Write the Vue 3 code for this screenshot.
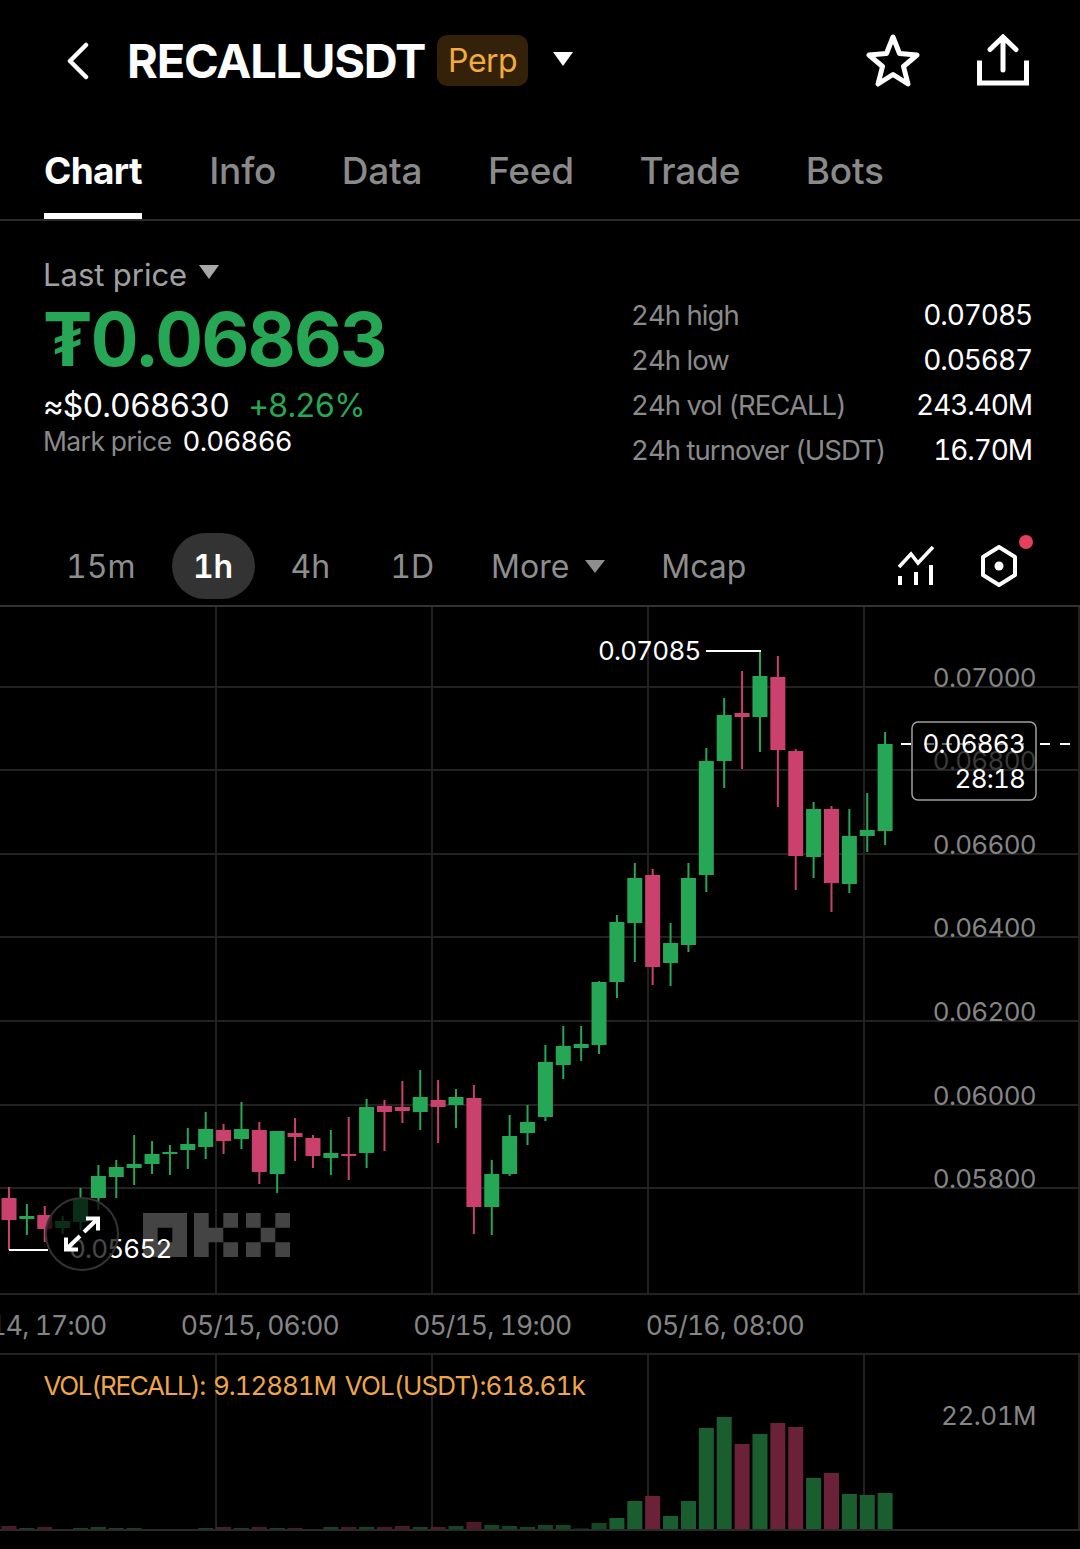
<template>
  <div class="page">
    <header class="top-bar">
      <div class="title-group">
        <svg class="back" width="24" height="38" viewBox="0 0 24 38" fill="none" stroke="#fff" stroke-width="4.5" stroke-linecap="round" stroke-linejoin="round">
          <path d="M20 3 4 19l16 16" />
        </svg>
        <h1 class="symbol">RECALLUSDT</h1>
        <span class="badge">Perp</span>
        <svg class="caret" width="22" height="16" viewBox="0 0 22 16"><path d="M1 1h20L11 15z" fill="#fff" /></svg>
      </div>
      <div class="top-actions">
        <svg width="54" height="54" viewBox="0 0 54 54" fill="none" stroke="#fff" stroke-width="5" stroke-linejoin="round">
          <path d="M27 3 33.500 19.500 51 21 37.500 32.500 42 50 27 40.500 12 50 16.500 32.500 3 21 20.500 19.500Z" />
        </svg>
        <svg width="52" height="54" viewBox="0 0 52 54" fill="none" stroke="#fff" stroke-width="5" stroke-linecap="round" stroke-linejoin="miter">
          <path d="M26 36V3M13 15.500 26 3l13 12.500" />
          <path d="M2.500 26.500V49h47V26.500" stroke-linecap="butt" />
        </svg>
      </div>
    </header>

    <nav class="tabs">
      <a v-for="tab in tabs" :key="tab" class="tab" :class="{ active: tab === 'Chart' }">{{ tab }}</a>
    </nav>

    <section class="summary">
      <div class="price-col">
        <div class="last-price">
          Last price
          <svg width="20" height="14" viewBox="0 0 20 14"><path d="M0 0h20L10 14z" fill="#a8a8a8" /></svg>
        </div>
        <div class="price">₮0.06863</div>
        <div class="usd-row">
          <span class="usd">≈$0.068630</span>
          <span class="change">+8.26%</span>
        </div>
        <div class="mark-row">
          <span class="mark-label">Mark price</span>
          <span class="mark-value">0.06866</span>
        </div>
      </div>
      <dl class="stats">
        <div v-for="s in stats" :key="s.label" class="stat">
          <dt>{{ s.label }}</dt>
          <dd>{{ s.value }}</dd>
        </div>
      </dl>
    </section>

    <div class="intervals">
      <span class="iv iv-15">15m</span>
      <span class="iv iv-1h">1h</span>
      <span class="iv iv-4h">4h</span>
      <span class="iv iv-1d">1D</span>
      <span class="iv iv-more">
        More
        <svg width="20" height="13" viewBox="0 0 20 13"><path d="M0 0h20L10 13z" fill="#8e8e8e" /></svg>
      </span>
      <span class="iv iv-mcap">Mcap</span>
      <div class="iv-tools">
        <svg width="38" height="40" viewBox="0 0 38 40" fill="none" stroke="#fff" stroke-width="4">
          <path d="M2 21 14 8l7 9L36 1" stroke-width="3.600" />
          <path d="M3 30v9M19 26v13M34 19v20" />
        </svg>
        <div class="hex-wrap">
          <svg width="38" height="42" viewBox="0 0 38 42" fill="none" stroke="#fff" stroke-width="4" stroke-linejoin="round">
            <path d="M19 2 35 12v18L19 40 3 30V12Z" />
            <circle cx="19" cy="21" r="4.500" fill="#fff" stroke="none" />
          </svg>
          <span class="dot"></span>
        </div>
      </div>
    </div>

    <div class="chart">
      <svg class="plot" width="1080" height="687" viewBox="0 607 1080 687">
        <line v-for="y in gridY" :key="y" x1="0" x2="1080" :y1="y" :y2="y" class="grid" />
        <line v-for="x in gridX" :key="x" :x1="x" :x2="x" y1="607" y2="1294" class="grid" />

        <text v-for="a in axis" :key="a.label" x="1036" :y="a.y" text-anchor="end" class="axis-label" :class="{ faded: a.faded }">{{ a.label }}</text>

        <g v-for="c in candleList" :key="c.x" :fill="c.color">
          <rect :x="c.x - 1" :y="c.wickTop" width="2" :height="c.wickBottom - c.wickTop" />
          <rect :x="c.x - 7.500" :y="c.top" width="15" :height="c.bottom - c.top" />
        </g>

        <g class="logo" fill="#444">
          <path fill-rule="evenodd" d="M143 1213h44v44h-44zM157.700 1227.700v14.600h14.600v-14.600z" />
          <path d="M194 1213h14.700v44H194zM208.700 1227.700h14.600v14.600h-14.600zM223.300 1213H238v14.700h-14.700zM223.300 1242.300H238V1257h-14.700z" />
          <path d="M246 1213h14.700v14.700H246zM275.300 1213H290v14.700h-14.700zM260.700 1227.700h14.600v14.600h-14.600zM246 1242.300h14.700V1257H246zM275.300 1242.300H290V1257h-14.700z" />
        </g>

        <!-- high / low markers -->
        <text x="598" y="660" class="marker">0.07085</text>
        <line x1="706" x2="761" y1="651" y2="651" class="marker-line" />
        <text x="69" y="1258" class="marker">0.05652</text>
        <line x1="9" x2="48" y1="1250" y2="1250" class="marker-line" />

        <!-- last price tag -->
        <line x1="901" x2="1071" y1="744" y2="744" class="last-line" />
        <line x1="924" x2="1030" y1="744" y2="744" class="last-line-in" />
        <rect x="912" y="722" width="124" height="78" rx="6" class="last-box" />
        <text x="1025" y="753" text-anchor="end" class="marker">0.06863</text>
        <text x="1025" y="788" text-anchor="end" class="marker">28:18</text>
      </svg>

      <button class="expand">
        <svg width="40" height="40" viewBox="0 0 40 40" fill="none" stroke="#fff" stroke-width="4">
          <path d="M24 4.500h12v12M36 4.500 22 18" />
          <path d="M16 35.500H4v-12M4 35.500 18 22" />
        </svg>
      </button>
    </div>

    <div class="time-axis">
      <span v-for="t in times" :key="t">{{ t }}</span>
    </div>

    <div class="volume">
      <svg class="plot" width="1080" height="176" viewBox="0 1355 1080 176">
        <line v-for="x in gridX" :key="x" :x1="x" :x2="x" y1="1355" y2="1530" class="grid" />
        <rect v-for="b in barList" :key="b.x" :x="b.x - 7.500" :y="1530 - b.h" width="15" :height="b.h" :fill="b.color" :opacity="b.opacity" />
        <line x1="0" x2="1080" y1="1530" y2="1530" class="base" />
        <text x="43.500" y="1395" class="vol-text"><tspan class="vol-name">VOL(RECALL):</tspan><tspan dx="8">9.12881M</tspan><tspan dx="9" class="vol-usdt">VOL(USDT):618.61k</tspan></text>
        <text x="1036" y="1425" text-anchor="end" class="axis-label vol-max">22.01M</text>
      </svg>
    </div>
  </div>
</template>

<script setup>
const tabs = ['Chart', 'Info', 'Data', 'Feed', 'Trade', 'Bots']

const stats = [
  { label: '24h high', value: '0.07085' },
  { label: '24h low', value: '0.05687' },
  { label: '24h vol (RECALL)', value: '243.40M' },
  { label: '24h turnover (USDT)', value: '16.70M' }
]

const gridY = [687, 770, 854, 937, 1021, 1105, 1188]
const gridX = [216, 432, 648, 864, 1079]

const axis = [
  { label: '0.07000', y: 687 },
  { label: '0.06800', y: 770, faded: true },
  { label: '0.06600', y: 854 },
  { label: '0.06400', y: 937 },
  { label: '0.06200', y: 1021 },
  { label: '0.06000', y: 1105 },
  { label: '0.05800', y: 1188 }
]

const times = ['05/14, 17:00', '05/15, 06:00', '05/15, 19:00', '05/16, 08:00']

// wick top, body top, body bottom, wick bottom, direction (1 = up)
const candles = [
  [1187, 1198, 1220, 1250, 0],
  [1204, 1216, 1219, 1235, 1],
  [1206, 1215, 1229, 1242, 0],
  [1216, 1221, 1228, 1234, 1],
  [1188, 1199, 1222, 1230, 1],
  [1165, 1176, 1198, 1210, 1],
  [1160, 1167, 1177, 1198, 1],
  [1135, 1164, 1168, 1185, 1],
  [1141, 1154, 1164, 1174, 1],
  [1145, 1152, 1154, 1175, 1],
  [1128, 1144, 1150, 1169, 1],
  [1112, 1129, 1147, 1159, 1],
  [1124, 1130, 1141, 1154, 0],
  [1102, 1129, 1139, 1149, 1],
  [1122, 1130, 1172, 1184, 0],
  [1131, 1131, 1174, 1193, 1],
  [1118, 1133, 1137, 1161, 0],
  [1135, 1138, 1156, 1168, 0],
  [1130, 1153, 1158, 1175, 1],
  [1117, 1154, 1156, 1180, 0],
  [1099, 1107, 1153, 1168, 1],
  [1100, 1106, 1112, 1151, 0],
  [1081, 1107, 1111, 1123, 0],
  [1070, 1097, 1112, 1130, 1],
  [1080, 1100, 1107, 1143, 0],
  [1089, 1097, 1105, 1128, 1],
  [1085, 1098, 1207, 1234, 0],
  [1160, 1174, 1207, 1235, 1],
  [1115, 1136, 1174, 1176, 1],
  [1105, 1122, 1133, 1145, 1],
  [1045, 1062, 1117, 1121, 1],
  [1026, 1046, 1065, 1079, 1],
  [1026, 1044, 1048, 1061, 1],
  [981, 982, 1045, 1054, 1],
  [915, 922, 982, 998, 1],
  [863, 878, 923, 962, 1],
  [869, 875, 967, 985, 0],
  [923, 943, 963, 986, 1],
  [863, 878, 945, 952, 1],
  [748, 761, 875, 892, 1],
  [698, 715, 761, 788, 1],
  [671, 713, 717, 769, 0],
  [651, 676, 717, 752, 1],
  [656, 677, 750, 807, 0],
  [749, 751, 856, 890, 0],
  [802, 809, 857, 878, 1],
  [806, 809, 883, 912, 0],
  [809, 836, 884, 893, 1],
  [793, 830, 836, 852, 1],
  [732, 744, 831, 845, 1]
]

const volumes = [
  4, 2, 3, 0.5, 2, 3, 2, 2, 1, 1, 1, 2, 3, 2, 3, 2, 2, 1, 3, 3, 3, 3, 4, 3, 3,
  4, 8, 5, 4, 3, 5, 5, 1.5, 7, 12, 29, 34, 14, 29, 102, 113, 86, 96, 107, 103,
  52, 57, 36, 35, 37
]

const candleX = (i) => 9 + 17.88 * i

const candleList = candles.map((c, i) => ({
  x: candleX(i),
  wickTop: c[0],
  top: c[1],
  bottom: c[2],
  wickBottom: c[3],
  color: c[4] ? '#26a755' : '#c9416c'
}))

const barList = volumes.map((h, i) => ({
  x: candleX(i),
  h,
  color: candles[i][4] ? '#1a5e30' : '#6b2239',
  opacity: h < 10 ? 0.75 : 1
}))
</script>

<style>
html,
body {
  background: #000;
}
</style>

<style scoped>
.page {
  width: 1080px;
  height: 1549px;
  overflow: hidden;
  background: #000;
  color: #fff;
  font-family: Inter, "Liberation Sans", sans-serif;
  font-feature-settings: "tnum";
}

.top-bar {
  height: 121px;
  display: flex;
  align-items: center;
  justify-content: space-between;
  padding: 0 51px 0 66px;
}

.title-group {
  display: flex;
  align-items: center;
}

.back {
  margin-right: 37px;
}

.symbol {
  margin: 0;
  font-size: 47px;
  font-weight: 700;
  letter-spacing: -1.2px;
}

.badge {
  margin-left: 12px;
  width: 91px;
  height: 51px;
  display: flex;
  align-items: center;
  justify-content: center;
  background: #33210a;
  border-radius: 10px;
  color: #f2ab3c;
  font-size: 32px;
  letter-spacing: -0.5px;
}

.caret {
  margin-left: 24px;
  margin-bottom: 4px;
}

.top-actions {
  display: flex;
  align-items: center;
  gap: 57px;
}

.tabs {
  height: 100px;
  display: flex;
  gap: 65.500px;
  padding-left: 44px;
  box-sizing: border-box;
  border-bottom: 2px solid #2c2c2c;
}

.tab {
  height: 98px;
  line-height: 100px;
  font-size: 37px;
  font-weight: 500;
  letter-spacing: -0.2px;
  color: #8a8a8a;
  box-sizing: border-box;
}

.tab.active {
  color: #fff;
  font-weight: 700;
  letter-spacing: -0.7px;
  margin-right: 2px;
  border-bottom: 6px solid #fff;
}

.summary {
  height: 312px;
  display: flex;
  justify-content: space-between;
  padding: 0 48px 0 43px;
}

.price-col {
  padding-top: 33px;
}

.last-price {
  display: flex;
  align-items: center;
  gap: 12px;
  height: 40px;
  font-size: 31px;
  color: #a0a0a0;
}

.last-price svg {
  margin-bottom: 4px;
}

.price {
  height: 90px;
  line-height: 90px;
  font-size: 74px;
  font-weight: 700;
  color: #26a755;
  letter-spacing: -1.6px;
}

.usd-row {
  display: flex;
  gap: 19px;
  height: 40px;
  margin-top: 1px;
  align-items: center;
  font-size: 32px;
  letter-spacing: -0.9px;
}

.change {
  color: #26a755;
  letter-spacing: -1.1px;
}

.mark-row {
  display: flex;
  align-items: center;
  gap: 11px;
  height: 32px;
  font-size: 27.5px;
  letter-spacing: -0.7px;
}

.mark-label {
  color: #8a8a8a;
  font-size: 26.5px;
  letter-spacing: -0.6px;
}

.stats {
  margin: 0;
  padding-top: 71px;
  width: 401px;
  font-size: 28px;
}

.stat {
  display: flex;
  justify-content: space-between;
  align-items: center;
  height: 45px;
}

.stat dt {
  color: #8a8a8a;
  font-size: 27.5px;
  letter-spacing: -0.95px;
}

.stat dd {
  margin: 0;
  color: #fff;
  letter-spacing: -1.1px;
}

.intervals {
  height: 74px;
  display: flex;
  align-items: center;
  position: relative;
  box-sizing: border-box;
  padding-bottom: 6px;
  border-bottom: 2px solid #333;
  font-size: 32px;
  color: #8e8e8e;
}

.iv {
  display: flex;
  align-items: center;
  height: 66px;
}

.iv-15 {
  margin-left: 66px;
}

.iv-1h {
  margin-left: 36px;
  width: 83px;
  justify-content: center;
  background: #333;
  border-radius: 33px;
  color: #fff;
  font-weight: 600;
}

.iv-4h {
  margin-left: 36px;
}

.iv-1d {
  margin-left: 60px;
}

.iv-more {
  margin-left: 57px;
  gap: 16px;
}

.iv-mcap {
  margin-left: 56px;
}

.iv-tools {
  margin-left: auto;
  margin-right: 62px;
  display: flex;
  align-items: center;
  gap: 45px;
}

.hex-wrap {
  position: relative;
  height: 42px;
}

.dot {
  position: absolute;
  top: -10px;
  right: -15px;
  width: 14px;
  height: 14px;
  border-radius: 50%;
  background: #e5405e;
}

.chart {
  position: relative;
  height: 687px;
}

.plot {
  display: block;
}

.grid {
  stroke: #222;
  stroke-width: 2;
}

.axis-label {
  font-size: 26px;
  letter-spacing: -0.7px;
  fill: #858585;
}

.axis-label.faded {
  fill: #3a3a3a;
}

.axis-label.vol-max {
  letter-spacing: -0.5px;
}

.marker {
  font-size: 26px;
  letter-spacing: -0.8px;
  fill: #fff;
}

.marker-line {
  stroke: #fff;
  stroke-width: 2;
}

.last-line {
  stroke: #fff;
  stroke-width: 2;
  stroke-dasharray: 10 129 10 10 10;
}

.last-line-in {
  stroke: #666;
  stroke-width: 2;
  stroke-dasharray: 10 8;
}

.last-box {
  fill: none;
  stroke: #a0a0a0;
  stroke-width: 1.500;
}

.expand {
  position: absolute;
  left: 45px;
  top: 590px;
  width: 74px;
  height: 74px;
  padding: 0;
  display: flex;
  align-items: center;
  justify-content: center;
  background: rgba(0, 0, 0, 0.72);
  border: 2px solid #333;
  border-radius: 50%;
}

.time-axis {
  height: 62px;
  margin-top: -1px;
  margin-left: -89px;
  box-sizing: border-box;
  display: flex;
  border-top: 2px solid #222;
  border-bottom: 2px solid #222;
  font-size: 26.5px;
  letter-spacing: -0.85px;
  color: #858585;
}

.time-axis span {
  width: 232.500px;
  flex: none;
  text-align: center;
  line-height: 60px;
}

.base {
  stroke: #2a2a2a;
  stroke-width: 2;
}

.vol-text {
  font-size: 26px;
  letter-spacing: -1.1px;
  fill: #efa64a;
}

.vol-name {
  letter-spacing: -1.3px;
}

.vol-usdt {
  letter-spacing: -0.9px;
}
</style>
